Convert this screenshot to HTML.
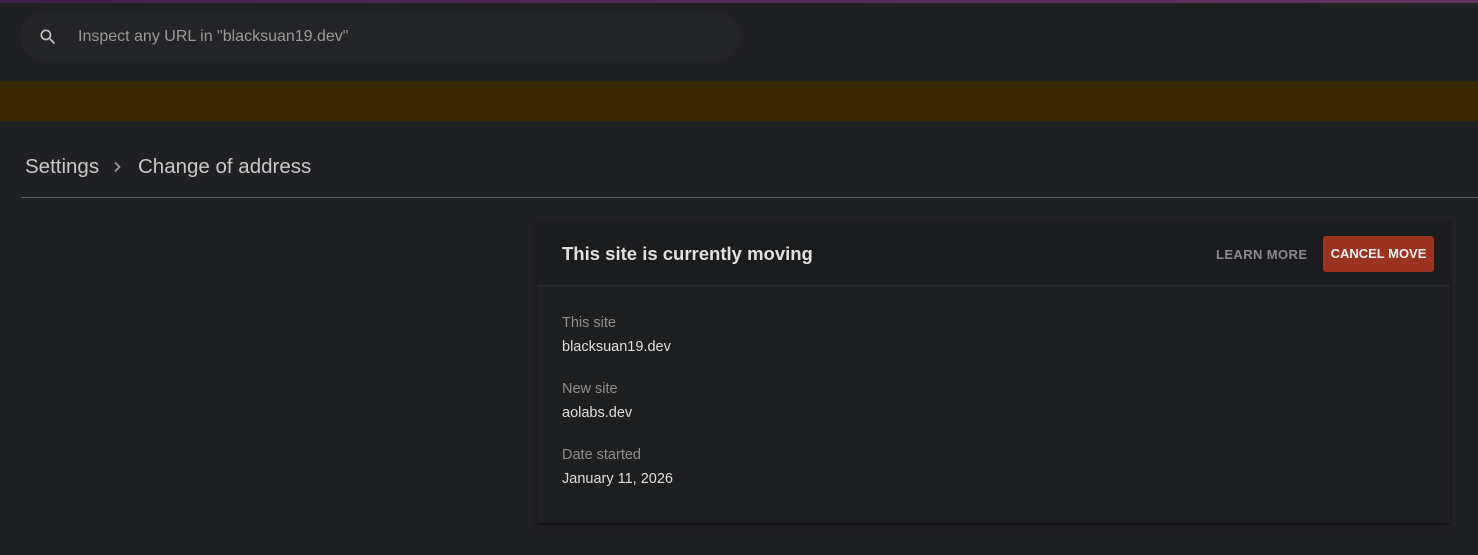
<!DOCTYPE html>
<html><head><meta charset="utf-8"><style>
*{box-sizing:border-box;margin:0;padding:0}
html,body{width:1478px;height:555px;overflow:hidden;background:#202124;font-family:"Liberation Sans",Roboto,sans-serif;position:relative}
.top{position:absolute;left:0;top:0;width:1478px;height:3px;background:linear-gradient(90deg,#3d1f4e,#5a2a5e 50%,#6a3060);}
.search{position:absolute;left:20px;top:13px;width:721px;height:48px;border-radius:24px;background:#242528;}
.search span{position:absolute;left:58px;top:15px;font-size:16px;color:#9a9a98}
.band{position:absolute;left:0;top:81px;width:1478px;height:40px;background:#372800}
.crumb{position:absolute;top:155px;font-size:20.5px;color:#c8c8c6}
.hr{position:absolute;left:21px;top:197px;width:1457px;height:1px;background:#5a5b5e}
.card{position:absolute;left:537px;top:221px;width:913px;height:302px;background:#1e1f21;box-shadow:0 2px 3px rgba(0,0,0,.5)}
.ch{position:absolute;left:0;top:0;width:913px;height:65px;background:#1b1c1e;border-bottom:1px solid #2c2d30}
.ch .t{position:absolute;left:25px;top:22px;font-size:18.5px;font-weight:bold;color:#e0e0e0}
.lm{position:absolute;left:679px;top:26px;font-size:13px;font-weight:bold;color:#8a8b8e;letter-spacing:.4px}
.cm{position:absolute;left:786px;top:15px;width:111px;height:36px;background:#9a3320;border-radius:3px;color:#eee;font-size:13px;font-weight:bold;text-align:center;line-height:36px}
.l{position:absolute;left:25px;font-size:14.5px;color:#8e8e8e}
.v{position:absolute;left:25px;font-size:14.5px;color:#dedede}
</style></head><body>
<div class="top"></div>
<div class="search"><svg style="left:18px;top:14px;position:absolute" width="20" height="20" viewBox="0 0 24 24"><path fill="#c8c8c6" d="M15.5 14h-.79l-.28-.27A6.47 6.47 0 0 0 16 9.5 6.5 6.5 0 1 0 9.5 16c1.61 0 3.09-.59 4.23-1.57l.27.28v.79l5 4.99L20.49 19l-4.99-5zm-6 0C7.01 14 5 11.99 5 9.5S7.01 5 9.5 5 14 7.01 14 9.5 11.99 14 9.5 14z"/></svg><span>Inspect any URL in "blacksuan19.dev"</span></div>
<div class="band"></div>
<div class="crumb" style="left:25px">Settings</div>
<svg style="position:absolute;left:111px;top:159px" width="14" height="16" viewBox="0 0 14 16"><path d="M4 3.5l4.5 4.5L4 12.5" fill="none" stroke="#a0a0a0" stroke-width="1.6"/></svg>
<div class="crumb" style="left:138px">Change of address</div>
<div class="hr"></div>
<div class="card">
<div class="ch"><div class="t">This site is currently moving</div><div class="lm">LEARN MORE</div><div class="cm">CANCEL MOVE</div></div>
<div class="l" style="top:94px">This site</div>
<div class="v" style="top:118px">blacksuan19.dev</div>
<div class="l" style="top:160px">New site</div>
<div class="v" style="top:184px">aolabs.dev</div>
<div class="l" style="top:226px">Date started</div>
<div class="v" style="top:250px">January 11, 2026</div>
</div>
</body></html>
